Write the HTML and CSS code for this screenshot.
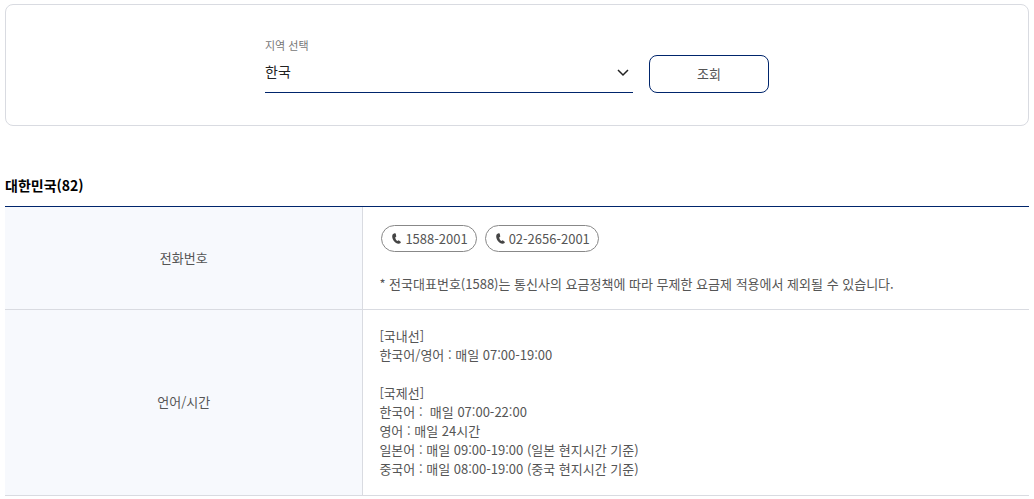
FILE: index.html
```html
<!DOCTYPE html>
<html lang="ko">
<head>
  <meta charset="UTF-8">
  <title>서비스 센터 안내</title>
  <meta name="viewport" content="width=device-width, initial-scale=1.0">
  <link rel="stylesheet" href="styles.css">
</head>
<body>
  <form class="search-box">
    <div class="field">
      <label for="region">지역 선택</label>
      <div class="select-wrap">
        <select id="region">
          <option>한국</option>
        </select>
        <svg class="arrow" viewBox="0 0 12 8" aria-hidden="true"><path d="M1 1l5 5 5-5"/></svg>
      </div>
    </div>
    <button type="button" class="btn-search">조회</button>
  </form>

  <h2>대한민국(82)</h2>
  <table>
    <tbody>
      <tr>
        <th scope="row">전화번호</th>
        <td>
          <div class="phones">
            <a class="phone" href="tel:1588-2001">
              <svg viewBox="0 0 9 11" aria-hidden="true"><path d="M2.600.3C1 .6.200 1.800.200 3.400.300 7 3.200 10.300 6.500 10.700c1.200.1 2.200-.4 2.400-1.700L6.700 7.200l-1.200.9C4.300 7.400 3.400 5.900 3.200 4.400l1.100-.8L3.700.5z"/></svg>
              1588-2001
            </a>
            <a class="phone" href="tel:02-2656-2001">
              <svg viewBox="0 0 9 11" aria-hidden="true"><path d="M2.600.3C1 .6.200 1.800.200 3.400.300 7 3.200 10.300 6.500 10.700c1.200.1 2.200-.4 2.400-1.700L6.700 7.200l-1.200.9C4.300 7.400 3.400 5.900 3.200 4.400l1.100-.8L3.700.5z"/></svg>
              02-2656-2001
            </a>
          </div>
          <p>* 전국대표번호(1588)는 통신사의 요금정책에 따라 무제한 요금제 적용에서 제외될 수 있습니다.</p>
        </td>
      </tr>
      <tr>
        <th scope="row">언어/시간</th>
        <td class="hours">
          [국내선]<br>
          한국어/영어 : 매일 07:00-19:00<br>
          <br>
          [국제선]<br>
          한국어 :&nbsp; 매일 07:00-22:00<br>
          영어 : 매일 24시간<br>
          일본어 : 매일 09:00-19:00 (일본 현지시간 기준)<br>
          중국어 : 매일 08:00-19:00 (중국 현지시간 기준)
        </td>
      </tr>
    </tbody>
  </table>
</body>
</html>
```
FILE: styles.css
```css
* {
  box-sizing: border-box;
}

body {
  margin: 0;
  padding: 4px 5px 0;
  background: #fff;
  color: #555;
  font-family: "Noto Sans CJK KR", sans-serif;
  font-size: 13px;
  line-height: 19px;
}

/* 지역 검색 */
.search-box {
  display: flex;
  justify-content: center;
  align-items: flex-end;
  gap: 16px;
  padding: 32px 20px;
  border: 1px solid #d9dbe1;
  border-radius: 8px;
}

.field {
  flex: 0 1 368px;
}

.field label {
  display: block;
  color: #777;
  font-size: 11px;
  line-height: 16px;
}

.select-wrap {
  position: relative;
}

.select-wrap select {
  display: block;
  width: 100%;
  height: 40px;
  padding: 0 24px 4px 0;
  border: 0;
  border-bottom: 1px solid #00256c;
  border-radius: 0;
  background: none;
  color: #222;
  font-family: inherit;
  font-size: 14px;
  appearance: none;
}

.arrow {
  position: absolute;
  top: 16px;
  right: 4px;
  width: 12px;
  height: 8px;
  fill: none;
  stroke: #222;
  stroke-width: 1.5;
  pointer-events: none;
}

.btn-search {
  width: 120px;
  height: 38px;
  padding: 0 0 2px;
  border: 1px solid #00256c;
  border-radius: 8px;
  background: #fff;
  color: #555;
  font-family: inherit;
  font-size: 13px;
  cursor: pointer;
}

h2 {
  margin: 48px 0 10px;
  color: #000;
  font-size: 14px;
  font-weight: bold;
  line-height: 22px;
}

/* 연락처 표 */
table {
  width: 100%;
  border-top: 1px solid #00256c;
  border-spacing: 0;
}

th,
td {
  border-bottom: 1px solid #d9dbe1;
}

th {
  width: 35%;
  padding: 0 0 2px;
  border-right: 1px solid #d9dbe1;
  background: #f7f9fd;
  font-weight: normal;
}

td {
  padding: 16px;
}

.hours {
  padding-bottom: 17px;
}

.phones {
  display: flex;
  flex-wrap: wrap;
  gap: 8px;
  padding: 2px;
}

.phone {
  display: flex;
  align-items: center;
  gap: 4px;
  height: 27px;
  padding: 0 8px 0 10px;
  border: 1px solid #888;
  border-radius: 14px;
  color: #555;
  text-decoration: none;
}

.phone svg {
  width: 9px;
  height: 11px;
  fill: #444;
}

td p {
  margin: 20px 0 0;
}
```
